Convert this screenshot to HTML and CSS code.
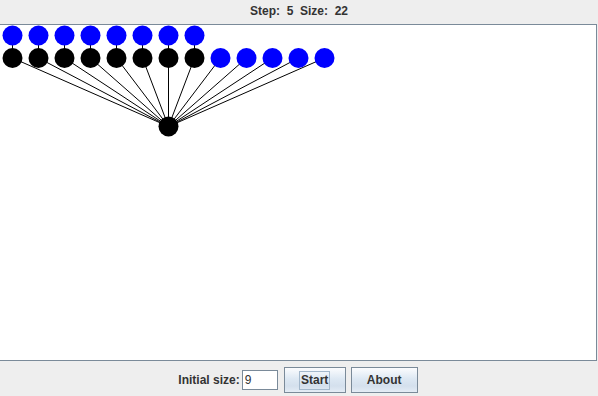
FILE: index.html
```html
<!DOCTYPE html>
<html>
<head>
<meta charset="utf-8">
<link rel="stylesheet" href="styles.css">
</head>
<body>
<div class="app">
  <div class="status">Step:  5  Size:  22</div>
  <div class="canvas">
    <svg class="tree" width="596" height="335" viewBox="0 25 596 335" xmlns="http://www.w3.org/2000/svg">
      <g stroke="#000" stroke-width="1" fill="none">
        <line x1="12.5" y1="58" x2="168.5" y2="126.5"/>
        <line x1="38.5" y1="58" x2="168.5" y2="126.5"/>
        <line x1="64.5" y1="58" x2="168.5" y2="126.5"/>
        <line x1="90.5" y1="58" x2="168.5" y2="126.5"/>
        <line x1="116.5" y1="58" x2="168.5" y2="126.5"/>
        <line x1="142.5" y1="58" x2="168.5" y2="126.5"/>
        <line x1="168.5" y1="58" x2="168.5" y2="126.5"/>
        <line x1="194.5" y1="58" x2="168.5" y2="126.5"/>
        <line x1="220.5" y1="58" x2="168.5" y2="126.5"/>
        <line x1="246.5" y1="58" x2="168.5" y2="126.5"/>
        <line x1="272.5" y1="58" x2="168.5" y2="126.5"/>
        <line x1="298.5" y1="58" x2="168.5" y2="126.5"/>
        <line x1="324.5" y1="58" x2="168.5" y2="126.5"/>
        <line x1="12.5" y1="35.5" x2="12.5" y2="58"/>
        <line x1="38.5" y1="35.5" x2="38.5" y2="58"/>
        <line x1="64.5" y1="35.5" x2="64.5" y2="58"/>
        <line x1="90.5" y1="35.5" x2="90.5" y2="58"/>
        <line x1="116.5" y1="35.5" x2="116.5" y2="58"/>
        <line x1="142.5" y1="35.5" x2="142.5" y2="58"/>
        <line x1="168.5" y1="35.5" x2="168.5" y2="58"/>
        <line x1="194.5" y1="35.5" x2="194.5" y2="58"/>
      </g>
      <g fill="#0000ff">
        <circle cx="12.5" cy="35.5" r="10"/>
        <circle cx="38.5" cy="35.5" r="10"/>
        <circle cx="64.5" cy="35.5" r="10"/>
        <circle cx="90.5" cy="35.5" r="10"/>
        <circle cx="116.5" cy="35.5" r="10"/>
        <circle cx="142.5" cy="35.5" r="10"/>
        <circle cx="168.5" cy="35.5" r="10"/>
        <circle cx="194.5" cy="35.5" r="10"/>
        <circle cx="220.5" cy="58" r="10"/>
        <circle cx="246.5" cy="58" r="10"/>
        <circle cx="272.5" cy="58" r="10"/>
        <circle cx="298.5" cy="58" r="10"/>
        <circle cx="324.5" cy="58" r="10"/>
      </g>
      <g fill="#000">
        <circle cx="12.5" cy="58" r="10"/>
        <circle cx="38.5" cy="58" r="10"/>
        <circle cx="64.5" cy="58" r="10"/>
        <circle cx="90.5" cy="58" r="10"/>
        <circle cx="116.5" cy="58" r="10"/>
        <circle cx="142.5" cy="58" r="10"/>
        <circle cx="168.5" cy="58" r="10"/>
        <circle cx="194.5" cy="58" r="10"/>
        <circle cx="168.5" cy="126.5" r="10"/>
      </g>
    </svg>
  </div>
  <div class="controls">
    <span class="label">Initial size:</span>
    <span class="field">9</span>
    <button class="btn focused"><span class="btn-text">Start</span></button>
    <button class="btn"><span class="btn-text">About</span></button>
  </div>
</div>
</body>
</html>
```

FILE: styles.css
```css
html, body {
  margin: 0;
  padding: 0;
  background: #eeeeee;
}
.app {
  width: 598px;
  height: 396px;
  display: flex;
  flex-direction: column;
  font-family: "Liberation Sans", Arial, sans-serif;
  font-size: 12px;
  font-weight: bold;
  color: #333333;
  overflow: hidden;
}
.status {
  height: 24px;
  line-height: 23px;
  text-align: center;
  white-space: pre;
}
.canvas {
  width: 596px;
  height: 335px;
  background: #ffffff;
  border-top: 1px solid #7a8a99;
  border-right: 1px solid #7a8a99;
  border-bottom: 1px solid #7a8a99;
}
.tree {
  display: block;
}
.controls {
  flex: 1;
  display: flex;
  align-items: center;
  justify-content: center;
  padding-top: 3px;
  padding-right: 2px;
}
.label {
  margin-right: 2px;
}
.field {
  box-sizing: border-box;
  width: 36px;
  height: 20px;
  border: 1px solid #7a8a99;
  background: #ffffff;
  font-weight: normal;
  color: #333333;
  font-size: 12px;
  line-height: 18px;
  padding-left: 2px;
  margin-right: 6px;
}
.btn {
  box-sizing: border-box;
  height: 26px;
  border: 1px solid #7a8a99;
  background: linear-gradient(#fbfcfe, #dde8f3 45%, #d4e0ed 75%, #e4ecf5);
  font-family: "Liberation Sans", Arial, sans-serif;
  font-size: 12px;
  font-weight: bold;
  color: #333333;
  padding: 0;
  margin: 0;
  display: flex;
  align-items: center;
  justify-content: center;
}
.btn.focused {
  width: 62px;
  margin-right: 5px;
}
.btn:last-child {
  width: 67px;
}
.btn-text {
  display: block;
  line-height: 17px;
  padding: 0 1px;
  border: 1px solid transparent;
}
.focused .btn-text {
  border-color: #a3b8cc;
}
```
